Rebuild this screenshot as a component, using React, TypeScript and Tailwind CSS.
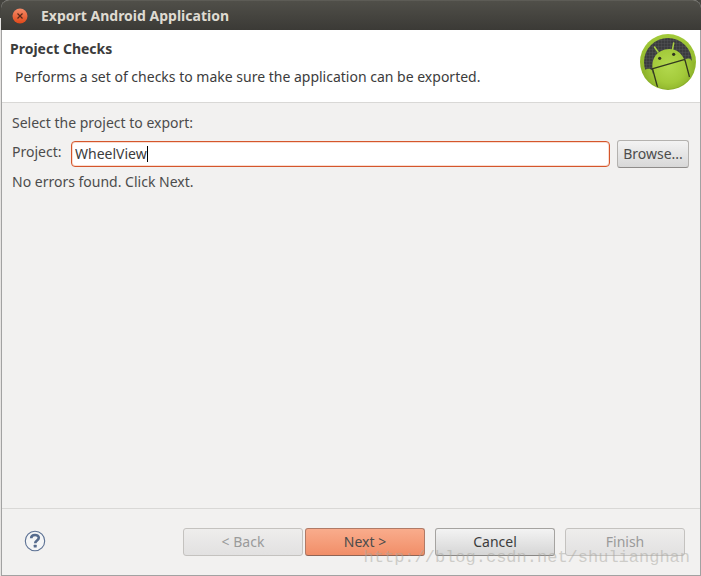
import { useState } from 'react';
import type { ReactNode } from 'react';

type WizardButtonProps = {
  children: ReactNode;
  primary?: boolean;
  disabled?: boolean;
};

function WizardButton({ children, primary, disabled }: WizardButtonProps) {
  const base = 'h-7 w-[120px] rounded-[3px] border text-center leading-5';
  let look = 'border-[#a5a3a0] border-b-[#8a8886] bg-linear-to-b from-[#f3f3f3] to-[#d6d6d6] text-[#3c3c3c]';
  if (primary) {
    look = 'border-[#b07a66] border-b-[#8f6455] bg-linear-to-b from-[#f9ac8c] to-[#f18e68] text-[#4c4c4c]';
  }
  if (disabled) {
    look = 'border-[#c4c2bf] bg-linear-to-b from-[#eeedec] to-[#e2e1e1] text-[#9a9a9a]';
  }
  return (
    <button type="button" disabled={disabled} className={`${base} ${look}`}>
      {children}
    </button>
  );
}

function AndroidLogo() {
  return (
    <svg viewBox="0 0 56 56" className="h-14 w-14 shrink-0" aria-hidden="true">
      <defs>
        <linearGradient id="ring" x1="0" y1="0" x2="0" y2="1">
          <stop offset="0" stopColor="#a3cb3a" />
          <stop offset="1" stopColor="#86ab25" />
        </linearGradient>
        <radialGradient id="body" gradientUnits="userSpaceOnUse" cx="29" cy="32" r="28">
          <stop offset="0" stopColor="#b3d94e" />
          <stop offset="0.6" stopColor="#a3ca3a" />
          <stop offset="1" stopColor="#89ae27" />
        </radialGradient>
        <pattern id="mesh" width="3" height="3" patternUnits="userSpaceOnUse">
          <rect width="3" height="3" fill="#3b3c3e" />
          <path d="M0 0h3M0 0v3" stroke="#57585b" strokeWidth="0.8" />
        </pattern>
        <clipPath id="disc">
          <circle cx="28" cy="28" r="27" />
        </clipPath>
      </defs>
      <circle cx="28" cy="28" r="28" fill="url(#ring)" />
      <circle cx="28" cy="28" r="24" fill="url(#mesh)" />
      <g clipPath="url(#disc)">
        <path d="M18 18l-3.500-5M32.500 15.500l1.200-6.500" stroke="#a9d040" strokeWidth="1.500" strokeLinecap="round" />
        <path d="M12.500 34c-1-9 4-16.500 12.500-18.500s16 2 19.300 10.200L54 56H14z" fill="url(#body)" />
        <path d="M-1 40L4.500 36.500c2-2.500 6-2.500 7.500 0L18 60H-1z" fill="url(#body)" />
        <path d="M44.500 28c0-4 5.500-4.500 7-1.500L58 30v22l-6 2z" fill="url(#body)" />
        <path d="M12 34.800L45 25.300M12.600 35l5 18.500M45 26l4.500 17" fill="none" stroke="#33391f" strokeWidth="1.300" />
        <circle cx="19.700" cy="24.300" r="1.600" fill="#30351f" />
        <circle cx="33.700" cy="20.300" r="1.600" fill="#30351f" />
      </g>
    </svg>
  );
}

function TitleBar() {
  return (
    <div className="-mx-px flex h-[30px] items-center rounded-t-lg border-t border-[#5d5c56] bg-linear-to-b from-[#504f49] to-[#3b3a36] pl-[11px]">
      <button type="button" aria-label="Close" className="h-4 w-4 rounded-full">
        <svg viewBox="0 0 16 16" className="h-4 w-4" aria-hidden="true">
          <defs>
            <linearGradient id="close" x1="0" y1="0" x2="0" y2="1">
              <stop offset="0" stopColor="#f58b69" />
              <stop offset="1" stopColor="#df4819" />
            </linearGradient>
          </defs>
          <circle cx="8" cy="8" r="7.500" fill="url(#close)" />
          <path d="M5.500 5.500l5 5M10.500 5.500l-5 5" stroke="#57291a" strokeWidth="1.200" />
        </svg>
      </button>
      <h1 className="ml-[13px] text-sm font-bold text-[#dfdbd2]">Export Android Application</h1>
    </div>
  );
}

export default function App() {
  const [project, setProject] = useState('WheelView');

  return (
    <div className="min-h-screen bg-[#dcdad7] bg-linear-to-b from-[#45443f] from-[18px] to-[#e6e4e2] to-[18px] pl-px font-['Noto_Sans',sans-serif] text-sm text-[#4c4c4c]">
      <main className="relative flex min-h-screen flex-col rounded-t-lg border-x border-b border-[#a2a2a2] bg-[#f2f1f0]">
        <TitleBar />

        <header className="flex h-[73px] items-start justify-between border-b border-[#d9d8d6] bg-white pt-1 pr-1 pl-2">
          <div className="pt-[3px] text-[#3c3c3c]">
            <h2 className="text-sm leading-6 font-bold">Project Checks</h2>
            <p className="pt-1 pl-[5px] leading-6">
              Performs a set of checks to make sure the application can be exported.
            </p>
          </div>
          <AndroidLogo />
        </header>

        <form
          className="flex grow flex-col pt-[10px] pr-[11px] pl-[10px]"
          onSubmit={(e) => e.preventDefault()}
        >
          <p className="leading-5">Select the project to export:</p>
          <div className="mt-[7px] flex items-center">
            <label htmlFor="project" className="w-[59px] pb-1">
              Project:
            </label>
            <div className="relative flex h-[26px] min-w-0 grow items-center rounded-[4px] border border-[#d4562c] bg-white px-[3px] shadow-[inset_0_0_0_1px_#fbdccf]">
              <input
                id="project"
                value={project}
                onChange={(e) => setProject(e.target.value)}
                className="field-sizing-content bg-transparent text-[#3c3c3c] outline-none"
              />
              {/* text caret */}
              <span className="h-4 w-px bg-black" />
            </div>
            <button
              type="button"
              className="ml-[7px] h-7 w-[72px] rounded-[3px] border border-[#b4b2af] border-b-[#8e8c8a] bg-linear-to-b from-[#f3f3f3] to-[#d8d8d8] text-center"
            >
              Browse...
            </button>
          </div>
          <p className="mt-1 leading-5">No errors found. Click Next.</p>
        </form>

        <footer className="flex h-[67px] items-center justify-between border-t border-[#d9d8d6] pr-[15px] pl-[22px]">
          <button type="button" aria-label="Help" className="pb-[2px]">
            <svg viewBox="0 0 22 22" className="h-[22px] w-[22px]" aria-hidden="true">
              <circle cx="11" cy="11" r="9.700" fill="#f4f5f6" stroke="#5b7093" strokeWidth="1.100" />
              <path
                d="M7.200 8.200c0-4.200 7.600-4.200 7.600-.4 0 2.800-3.600 2.500-3.600 5.400"
                fill="none"
                stroke="#566b8d"
                strokeWidth="2.600"
              />
              <rect x="9.700" y="14.700" width="3" height="2.800" rx="0.500" fill="#566b8d" />
            </svg>
          </button>
          <div className="flex gap-[10px]">
            <div className="flex gap-[2px]">
              <WizardButton disabled>&lt; Back</WizardButton>
              <WizardButton primary>Next &gt;</WizardButton>
            </div>
            <WizardButton>Cancel</WizardButton>
            <WizardButton disabled>Finish</WizardButton>
          </div>
        </footer>

        <span className="pointer-events-none absolute right-[10px] bottom-[7px] font-['Liberation_Mono',monospace] text-[17px] leading-5 text-[#a8a7a0]/50">
          http://blog.csdn.net/shulianghan
        </span>
      </main>
    </div>
  );
}
